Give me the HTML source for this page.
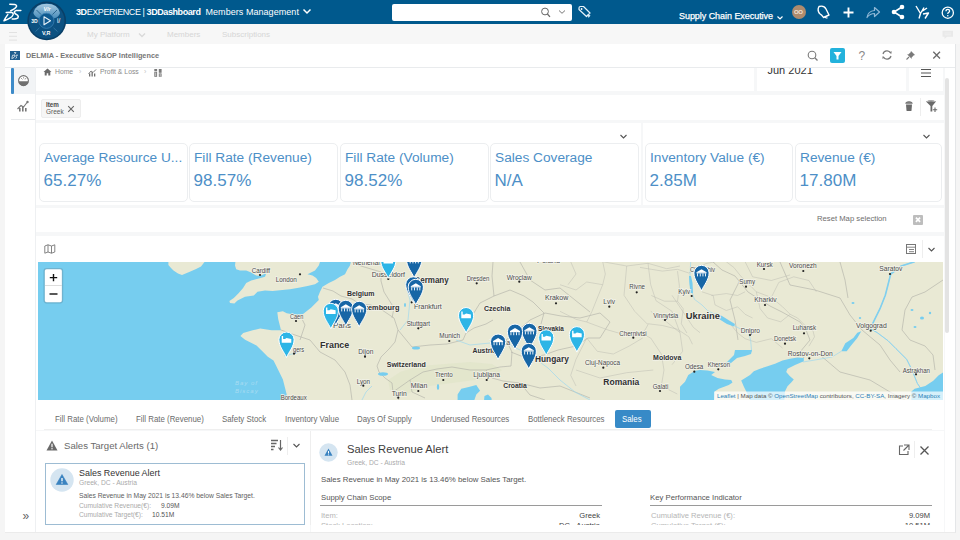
<!DOCTYPE html>
<html><head><meta charset="utf-8">
<style>
*{margin:0;padding:0;box-sizing:border-box}
html,body{width:960px;height:540px;overflow:hidden;background:#f5f5f5;font-family:"Liberation Sans",sans-serif;color:#3d3d3d}
.a{position:absolute}
.t{position:absolute;white-space:nowrap;line-height:1}
#top{left:0;top:0;width:960px;height:24px;background:#00598d}
#bar2{left:0;top:24px;width:960px;height:20px;background:#f7f7f7}
#widget{left:5px;top:44px;width:951px;height:489px;background:#fff;border-right:1px solid #e4e6e8;border-bottom:1px solid #ebebeb;overflow:hidden}
.panel{position:absolute;background:#fff}
.card{position:absolute;top:143px;height:59px;border:1px solid #eceef0;border-radius:5px;background:#fff}
.ct{position:absolute;left:4px;top:6.7px;font-size:13.7px;color:#4d8fc7;white-space:nowrap;line-height:1}
.cv{position:absolute;left:3.6px;top:28px;font-size:17px;color:#4d8fc7;white-space:nowrap;line-height:1}
.tab{position:absolute;top:415px;font-size:9.1px;color:#6b6b6b;white-space:nowrap;line-height:1;transform:scaleX(0.865);transform-origin:0 0}
</style></head>
<body>
<!-- TOP BAR -->
<div id="top" class="a">
  <svg class="a" style="left:0;top:0" width="28" height="24" viewBox="0 0 28 24">
    <g fill="none" stroke="#fff" stroke-width="1.5" stroke-linecap="round" stroke-linejoin="round">
      <path d="M9.8 4.3 L14.7 4.4 Q16.9 5 16.5 6.6 Q15.8 8.5 10.7 10.8"/>
      <path d="M20.9 10.4 L16 10.6 Q14 11.3 14.4 12.6 Q15 13.9 17.5 15.1 Q18.9 16.4 17.9 17.9 Q16.8 19 12.2 19.1"/>
      <path d="M6.2 12.4 L11.1 12.2 Q13.4 12.6 13.2 14.4 Q12.5 16.8 9.8 18.2 Q7 19.8 4 20.7 Q5.2 18 7.8 14.6"/>
    </g>
  </svg>
  <div class="t" style="left:76px;top:8px;font-size:9px;color:#fff;letter-spacing:-0.42px"><b>3D</b>EXPERIENCE | <b>3DDashboard</b></div>
  <div class="t" style="left:205.5px;top:7.5px;font-size:9px;color:#fff;letter-spacing:0.05px">Members Management</div>
  <svg class="a" style="left:302px;top:8px" width="10" height="7" viewBox="0 0 10 7"><path d="M1.5 1.5 L5 5 L8.5 1.5" fill="none" stroke="#fff" stroke-width="1.5"/></svg>
  <div class="a" style="left:392px;top:4px;width:180px;height:17px;background:#fff;border-radius:2px"></div>
  <svg class="a" style="left:538px;top:6px" width="13" height="13" viewBox="0 0 13 13"><circle cx="7" cy="5.5" r="3.4" fill="none" stroke="#666" stroke-width="1"/><path d="M9.4 8 L12 10.8" stroke="#666" stroke-width="1.2"/></svg>
  <svg class="a" style="left:558px;top:9px" width="8" height="6" viewBox="0 0 8 6"><path d="M1 1.5 L4 4.3 L7 1.5" fill="none" stroke="#777" stroke-width="1"/></svg>
  <svg class="a" style="left:577px;top:4px" width="16" height="16" viewBox="0 0 16 16"><path d="M2 4 Q2 2.5 3.5 2.5 L6.5 2.5 L13 9 L9.5 12.5 L2 5.5Z" fill="none" stroke="#e6f2fa" stroke-width="1.2" stroke-linejoin="round"/><circle cx="4.6" cy="5" r="0.9" fill="#fff"/><path d="M10.5 10 L13.5 11.5 L11.5 14Z" fill="#d8ecf8"/></svg>
  <div class="t" style="left:679px;top:12px;font-size:9px;color:#fff;letter-spacing:-0.05px;-webkit-text-stroke:0.25px #fff">Supply Chain Executive</div>
  <svg class="a" style="left:776px;top:15px" width="8" height="6" viewBox="0 0 8 6"><path d="M1.5 1.5 L4 4 L6.5 1.5" fill="none" stroke="#fff" stroke-width="1.2"/></svg>
  <div class="a" style="left:792px;top:5px;width:14px;height:14px;border-radius:50%;background:#ad8b6e"></div>
  <div class="t" style="left:794px;top:9px;font-size:6px;color:#f1e3d6;font-weight:bold;letter-spacing:-0.3px">OO</div>
  <svg class="a" style="left:815px;top:4px" width="17" height="16" viewBox="0 0 17 16"><path d="M4 2.5 Q9 1 11 5 Q12.5 8 14 11 L8.5 13.5 Q7 11 4.5 9.5 Q2 6 4 2.5Z" fill="none" stroke="#fff" stroke-width="1.4" stroke-linejoin="round"/><path d="M10 12.5 Q10.5 14.5 12.5 13.8" fill="none" stroke="#fff" stroke-width="1.2"/></svg>
  <svg class="a" style="left:841px;top:5px" width="15" height="15" viewBox="0 0 15 15"><path d="M7.5 2.5 L7.5 12.5 M2.5 7.5 L12.5 7.5" stroke="#fff" stroke-width="1.9"/></svg>
  <svg class="a" style="left:865px;top:5px" width="16" height="15" viewBox="0 0 16 15"><path d="M2 12.5 Q3 6 9.5 5.5 L9.5 2.5 L14.5 7 L9.5 11.5 L9.5 8.5 Q5 8.5 2 12.5Z" fill="none" stroke="#8fb8d6" stroke-width="1.2" stroke-linejoin="round"/></svg>
  <svg class="a" style="left:890px;top:4px" width="16" height="16" viewBox="0 0 16 16"><path d="M12 3 L4 8 L12 13" fill="none" stroke="#fff" stroke-width="1.6"/><circle cx="12" cy="3" r="2.3" fill="#fff"/><circle cx="4" cy="8" r="2.3" fill="#fff"/><circle cx="12" cy="13" r="2.3" fill="#fff"/></svg>
  <svg class="a" style="left:914px;top:4px" width="17" height="16" viewBox="0 0 17 16"><path d="M2 2 L6.5 9.5 L5 14.5 M6.5 9.5 L10 3.5 M8.5 7 L13 4 M9 10 L14.5 9 L11 14.5" fill="none" stroke="#fff" stroke-width="1.4" stroke-linejoin="round"/></svg>
  <svg class="a" style="left:939px;top:3.5px" width="17" height="17" viewBox="0 0 17 17"><circle cx="8.8" cy="8.7" r="5.6" fill="none" stroke="#fff" stroke-width="1.3"/><path d="M7 7.2 Q7 5.3 8.8 5.3 Q10.6 5.3 10.6 6.9 Q10.6 7.9 9.5 8.5 Q8.8 8.9 8.8 10" fill="none" stroke="#fff" stroke-width="1.3"/><circle cx="8.8" cy="11.8" r="0.8" fill="#fff"/></svg>
</div>
<div id="bar2" class="a">
  <div class="a" style="left:8.5px;top:7.5px;width:8px;height:1px;background:#e2e2e2;box-shadow:0 3.8px 0 #e2e2e2,0 7.6px 0 #e2e2e2"></div>
  <div class="t" style="left:87px;top:7px;font-size:8px;color:#d6d6d6">My Platform</div>
  <svg class="a" style="left:138px;top:8px" width="8" height="6"><path d="M1 1.5 L4 4.5 L7 1.5" fill="none" stroke="#d9d9d9" stroke-width="1.3"/></svg>
  <div class="t" style="left:167px;top:7px;font-size:8px;color:#d6d6d6">Members</div>
  <div class="t" style="left:222px;top:7px;font-size:8px;color:#d6d6d6">Subscriptions</div>
  <svg class="a" style="left:942px;top:6px" width="12" height="10" viewBox="0 0 12 10"><path d="M0.5 0.8 L11 0.8 L11 6.8 L5 6.8 L2.5 9 L2.5 6.8 L0.5 6.8Z" fill="#e9e9e9"/><path d="M2.5 3 L9 3 M2.5 4.8 L9 4.8" stroke="#f4f4f4" stroke-width="0.7"/></svg>
</div>
<!-- compass -->
<svg class="a" style="left:26px;top:0" width="42" height="42" viewBox="0 0 42 42">
  <defs><linearGradient id="cg" x1="0" y1="0" x2="0" y2="1"><stop offset="0" stop-color="#a4c8e0"/><stop offset="1" stop-color="#4b8ebb"/></linearGradient></defs>
  <circle cx="20.7" cy="20.9" r="19.4" fill="#093f67"/>
  <circle cx="20.7" cy="20.9" r="17.8" fill="#0c5181"/>
  <path d="M7.3 13 Q9.5 3.8 20.7 3.8 Q31.9 3.8 34 13 Q33 17 28.5 18.2 L13 18.2 Q8.5 17 7.3 13Z" fill="url(#cg)"/>
  <g stroke="#0d4a75" stroke-width="0.7"><path d="M10.5 10 L15 14.5"/><path d="M31 10 L26.5 14.5"/></g>
  <circle cx="20.4" cy="20.8" r="7.6" fill="#0f5a90" stroke="#3a7fb1" stroke-width="0.8"/>
  <path d="M18 16.8 L24.5 20.8 L18 24.8Z" fill="none" stroke="#e8f1f8" stroke-width="1.1" stroke-linejoin="round"/>
  <g stroke="#3f7fae" stroke-width="0.7"><path d="M9.5 31.5 L13.5 27.8"/><path d="M31.5 31.5 L27.5 27.8"/></g>
  <text x="5.2" y="23" font-size="5" font-weight="bold" fill="#fff" font-family="Liberation Sans">3D</text>
  <text x="16" y="34.5" font-size="5.4" font-weight="bold" fill="#fff" font-family="Liberation Sans">V,R</text>
  <text x="31" y="22.5" font-size="6.5" fill="#fff" font-family="Liberation Sans">i/</text>
  <text x="17.5" y="10.5" font-size="5.4" font-weight="bold" fill="#fff" font-family="Liberation Sans" font-style="italic">V/r</text>
</svg>
<div id="widget" class="a"></div>
<!-- widget header -->
<div class="a" style="left:5px;top:67px;width:950px;height:1px;background:#e9ebed"></div>
<div class="a" style="left:10px;top:51px;width:10px;height:9px;background:#1f5d8f"></div>
<svg class="a" style="left:10px;top:51px" width="10" height="9" viewBox="0 0 10 9"><g fill="none" stroke="#fff" stroke-width="0.7"><path d="M4 1.5 L6 1.6 L4.5 3.5"/><path d="M2.5 4.2 L4.5 4.2 Q5 5 4 6.5 L1.8 7.6Z"/><path d="M8 4.2 L6 4.2 Q5.3 5 6.5 6 Q7 7 5.5 7.6"/></g></svg>
<div class="t" style="left:26px;top:52px;font-size:7.3px;font-weight:bold;color:#767676">DELMIA - Executive S&amp;OP Intelligence</div>
<!-- header icons -->
<svg class="a" style="left:806px;top:49px" width="14" height="14" viewBox="0 0 14 14"><circle cx="6" cy="6" r="3.8" fill="none" stroke="#7a7a7a" stroke-width="1.1"/><path d="M8.8 8.8 L11.5 11.5" stroke="#7a7a7a" stroke-width="1.3"/></svg>
<div class="a" style="left:830px;top:48px;width:15px;height:15px;background:#23b2dc;border-radius:2px"></div>
<svg class="a" style="left:830px;top:48px" width="15" height="15" viewBox="0 0 15 15"><path d="M3.5 4 L11.5 4 L8.5 8 L8.5 11.5 L6.5 11.5 L6.5 8Z" fill="#fff"/></svg>
<div class="t" style="left:858.5px;top:50px;font-size:12px;color:#888">?</div>
<svg class="a" style="left:880px;top:48px" width="14" height="14" viewBox="0 0 14 14"><path d="M3 6 A4.2 4.2 0 0 1 10.8 5.2" fill="none" stroke="#7a7a7a" stroke-width="1.2"/><path d="M11 8 A4.2 4.2 0 0 1 3.2 8.8" fill="none" stroke="#7a7a7a" stroke-width="1.2"/><path d="M9.3 4.5 L11.5 5.8 L11.5 3Z" fill="#7a7a7a"/><path d="M4.7 9.5 L2.5 8.2 L2.5 11Z" fill="#7a7a7a"/></svg>
<svg class="a" style="left:904px;top:48px" width="14" height="14" viewBox="0 0 14 14"><path d="M7 3 L11 7 L9.5 7.5 L7.5 9.8 L7.8 11 L3 6.2 L4.2 6.5 L6.5 4.5Z" fill="#7a7a7a"/><path d="M5 9 L2.5 11.5" stroke="#7a7a7a" stroke-width="1.1"/></svg>
<svg class="a" style="left:930px;top:49px" width="13" height="13" viewBox="0 0 13 13"><path d="M3.3 2.8 L10 9.5 M10 2.8 L3.3 9.5" stroke="#6a6a6a" stroke-width="1.3"/></svg>
<!-- sidebar -->
<div class="a" style="left:35px;top:67px;width:1px;height:465px;background:#eef0f2"></div>
<div class="a" style="left:10.5px;top:68px;width:24.5px;height:25.5px;background:#f2f4f6"></div>
<div class="a" style="left:10.5px;top:68px;width:3px;height:25.5px;background:#3d8bc9;border-radius:1px"></div>
<div class="a" style="left:11px;top:119px;width:24px;height:1px;background:#e8eaec"></div>
<svg class="a" style="left:17px;top:74px" width="13" height="13" viewBox="0 0 13 13"><circle cx="6.5" cy="6.5" r="4.9" fill="#fff" stroke="#707070" stroke-width="1.1"/><path d="M1.6 7.3 L11.4 7.3 A4.9 4.9 0 0 1 1.6 7.3Z" fill="#707070"/><path d="M4 4 L5.5 5.5 M6.5 3 L6.8 4.6 M9 4 L8 5.5" stroke="#888" stroke-width="0.8"/></svg>
<svg class="a" style="left:16px;top:99px" width="14" height="14" viewBox="0 0 14 14"><g fill="#777"><rect x="3" y="9" width="1.6" height="3.5"/><rect x="6" y="7.5" width="1.6" height="5"/><rect x="9" y="9" width="1.6" height="3.5"/></g><path d="M1.5 10 L5 6.5 L7.5 8 L11 3.5" fill="none" stroke="#777" stroke-width="1.1"/><circle cx="11.5" cy="3" r="1.2" fill="#777"/></svg>
<div class="t" style="left:22.5px;top:510px;font-size:12px;color:#666">&#187;</div>
<div class="a" style="left:0;top:0;width:960px;height:540px;clip-path:inset(68px 15px 8px 36px)">
<!-- content background -->
<div class="a" style="left:36px;top:67px;width:909px;height:465px;background:#f6f7f8"></div>
<!-- breadcrumb panel -->
<div class="panel" style="left:36px;top:67px;width:718px;height:24px"></div>
<svg class="a" style="left:43px;top:68px" width="9" height="8" viewBox="0 0 9 8"><path d="M4.5 0.5 L8.5 4 L7.3 4 L7.3 7.5 L5.3 7.5 L5.3 5.3 L3.7 5.3 L3.7 7.5 L1.7 7.5 L1.7 4 L0.5 4Z" fill="#6a6a6a"/></svg>
<div class="t" style="left:55px;top:68.5px;font-size:6.8px;color:#8a8a8a">Home</div>
<div class="t" style="left:79px;top:68px;font-size:7px;color:#c5c5c5">&#8250;</div>
<svg class="a" style="left:88px;top:68px" width="9" height="9" viewBox="0 0 9 9"><g fill="#6f6f6f"><rect x="1" y="5.5" width="1.3" height="3"/><rect x="3.5" y="4" width="1.3" height="4.5"/><rect x="6" y="5.5" width="1.3" height="3"/></g><path d="M0.5 6 L3 3 L5 4.5 L8 1.5" fill="none" stroke="#6f6f6f" stroke-width="0.9"/></svg>
<div class="t" style="left:100px;top:68.5px;font-size:6.85px;color:#8a8a8a">Profit &amp; Loss</div>
<div class="t" style="left:144px;top:68px;font-size:7px;color:#c5c5c5">&#8250;</div>
<svg class="a" style="left:153.5px;top:68.5px" width="9" height="8" viewBox="0 0 9 8"><g fill="#7a7a7a"><rect x="0.3" y="0" width="2.8" height="2.2"/><rect x="0.3" y="2.8" width="2.8" height="5"/><rect x="4.8" y="0" width="2.8" height="3.8"/><rect x="4.8" y="4.4" width="2.8" height="3.4"/></g><path d="M1.7 3.5 L1.7 7 M6.2 5 L6.2 7.5" stroke="#fff" stroke-width="0.6"/></svg>
<div class="panel" style="left:757px;top:67px;width:149px;height:24px"></div>
<div class="t" style="left:767.5px;top:65px;font-size:11px;color:#333">Jun 2021</div>
<div class="panel" style="left:909px;top:67px;width:34px;height:24px"></div>
<div class="a" style="left:921px;top:69px;width:10px;height:1.2px;background:#555;box-shadow:0 3.5px 0 #555,0 7px 0 #555"></div>
<!-- filter panel -->
<div class="panel" style="left:36px;top:95px;width:908px;height:25px"></div>
<div class="a" style="left:41px;top:99px;width:40px;height:19px;background:#f6f6f6;border:1px solid #ededed;border-radius:2px"></div>
<div class="t" style="left:46px;top:102px;font-size:6.3px;font-weight:bold;color:#4a4a4a">Item</div>
<div class="t" style="left:46px;top:108.8px;font-size:6.5px;color:#5a5a5a">Greek</div>
<svg class="a" style="left:66px;top:104px" width="10" height="10" viewBox="0 0 10 10"><path d="M2.2 2.2 L7.8 7.8 M7.8 2.2 L2.2 7.8" stroke="#666" stroke-width="1.1"/></svg>
<svg class="a" style="left:904px;top:100px" width="10" height="12" viewBox="0 0 10 12"><path d="M1.3 3.8 Q1.3 1.2 5 1.2 Q8.7 1.2 8.7 3.8Z" fill="#6a6a6a"/><path d="M2 4.4 L8 4.4 L7.5 10.4 Q7.4 11 6.8 11 L3.2 11 Q2.6 11 2.5 10.4Z" fill="#6a6a6a"/><path d="M2.2 3.2 Q5 2.4 7.8 3.2" stroke="#aaa" stroke-width="0.5" fill="none"/></svg>
<div class="a" style="left:920px;top:98px;width:1px;height:18px;background:#eee"></div>
<svg class="a" style="left:925px;top:99px" width="14" height="14" viewBox="0 0 14 14"><path d="M1 2.5 Q6 0 11 2.5 L7.3 7 L7.3 12.5 L5.5 12.5 L5.5 7Z" fill="#6a6a6a"/><path d="M1.8 2.6 Q6 1.3 10.2 2.6" stroke="#ddd" stroke-width="0.6" fill="none"/><path d="M10 8.5 L10 13 M7.8 10.8 L12.2 10.8" stroke="#6a6a6a" stroke-width="1.1"/></svg>
<!-- KPI panels -->
<div class="panel" style="left:36px;top:123px;width:605px;height:82px"></div>
<div class="panel" style="left:643px;top:123px;width:301px;height:82px"></div>
<svg class="a" style="left:619px;top:133px" width="9" height="7" viewBox="0 0 9 7"><path d="M1.5 2 L4.5 5 L7.5 2" fill="none" stroke="#555" stroke-width="1.1"/></svg>
<svg class="a" style="left:922px;top:133px" width="9" height="7" viewBox="0 0 9 7"><path d="M1.5 2 L4.5 5 L7.5 2" fill="none" stroke="#555" stroke-width="1.1"/></svg>
<div class="card" style="left:39px;width:149px"><div class="ct">Average Resource U...</div><div class="cv">65.27%</div></div>
<div class="card" style="left:189px;width:149px"><div class="ct">Fill Rate (Revenue)</div><div class="cv">98.57%</div></div>
<div class="card" style="left:340px;width:149px"><div class="ct">Fill Rate (Volume)</div><div class="cv">98.52%</div></div>
<div class="card" style="left:490px;width:149px"><div class="ct">Sales Coverage</div><div class="cv">N/A</div></div>
<div class="card" style="left:645px;width:148px"><div class="ct">Inventory Value (€)</div><div class="cv">2.85M</div></div>
<div class="card" style="left:795px;width:147px"><div class="ct">Revenue (€)</div><div class="cv">17.80M</div></div>
<!-- reset panel -->
<div class="panel" style="left:36px;top:208px;width:908px;height:24px"></div>
<div class="t" style="left:817px;top:215.3px;font-size:7.7px;color:#6e6e6e">Reset Map selection</div>
<div class="a" style="left:913px;top:215px;width:10px;height:9.5px;background:#bdbdbd;border-radius:1px"></div>
<svg class="a" style="left:913px;top:215px" width="10" height="10" viewBox="0 0 10 10"><path d="M2.9 2.7 L7.1 6.9 M7.1 2.7 L2.9 6.9" stroke="#fff" stroke-width="1.7"/></svg>
<!-- map panel -->
<div class="panel" style="left:36px;top:236px;width:908px;height:194px"></div>
<svg class="a" style="left:44px;top:244px" width="12" height="10" viewBox="0 0 12 10"><path d="M0.8 2 L4 0.8 L7.5 2 L10.8 0.8 L10.8 8 L7.5 9.2 L4 8 L0.8 9.2Z M4 0.8 L4 8 M7.5 2 L7.5 9.2" fill="none" stroke="#777" stroke-width="0.9" stroke-linejoin="round"/></svg>
<svg class="a" style="left:906px;top:244px" width="10" height="10" viewBox="0 0 10 10"><rect x="0.5" y="0.5" width="9" height="9" fill="none" stroke="#777" stroke-width="1"/><path d="M0.5 3.2 L9.5 3.2 M3 5.5 L8 5.5 M3 7.7 L8 7.7" stroke="#777" stroke-width="0.9"/></svg>
<div class="a" style="left:922px;top:240px;width:1px;height:18px;background:#eee"></div>
<svg class="a" style="left:927px;top:246px" width="9" height="7" viewBox="0 0 9 7"><path d="M1.5 2 L4.5 5 L7.5 2" fill="none" stroke="#555" stroke-width="1.1"/></svg>
<!--MAPSTART--><svg class="a" style="left:38px;top:262px" width="905" height="138" viewBox="38 262 905 138">
<rect x="38" y="262" width="905" height="138" fill="#e9e9d4"/>
<polygon fill="#dce2c4" fill-opacity="0.45" points="388,380 400,372 420,366 445,364 470,362 492,364 502,370 495,376 475,380 452,383 430,386 412,392 398,396 390,390"/>
<polyline fill="none" stroke="#aeaea6" stroke-width="0.6" stroke-linejoin="round" points="323.0,288.0 333.0,291.0 341.0,296.0 352.0,299.0 360.0,304.0 371.0,305.0 382.0,310.0 394.0,318.0 398.0,330.0 395.0,342.0 389.0,349.0 381.0,357.0 377.0,366.0 379.0,372.0 385.0,378.0 392.0,383.0 393.0,392.0 399.0,400.0"/>
<polyline fill="none" stroke="#aeaea6" stroke-width="0.6" stroke-linejoin="round" points="352.0,262.0 361.0,266.0 381.0,272.0 381.0,281.0 384.0,292.0 389.0,300.0 394.0,308.0 392.0,318.0"/>
<polyline fill="none" stroke="#aeaea6" stroke-width="0.6" stroke-linejoin="round" points="398.0,330.0 412.0,347.0 430.0,345.0 447.0,344.0 463.0,340.0 466.0,333.0 474.0,328.0 486.0,324.0 493.0,320.0"/>
<polyline fill="none" stroke="#aeaea6" stroke-width="0.6" stroke-linejoin="round" points="466.0,333.0 472.0,316.0 480.0,303.0 494.0,296.0 510.0,290.0 524.0,296.0 533.0,302.0 544.0,313.0 541.0,324.0"/>
<polyline fill="none" stroke="#aeaea6" stroke-width="0.6" stroke-linejoin="round" points="493.0,262.0 492.0,276.0 494.0,296.0"/>
<polyline fill="none" stroke="#aeaea6" stroke-width="0.6" stroke-linejoin="round" points="393.0,392.0 410.0,380.0 423.0,372.0 437.0,369.0 452.0,367.0 470.0,370.0 486.0,370.0 500.0,367.0 511.0,366.0 512.0,352.0 506.0,340.0 515.0,333.0"/>
<polyline fill="none" stroke="#aeaea6" stroke-width="0.6" stroke-linejoin="round" points="486.0,370.0 492.0,378.0 503.0,381.0 520.0,383.0 540.0,388.0 560.0,386.0"/>
<polyline fill="none" stroke="#aeaea6" stroke-width="0.6" stroke-linejoin="round" points="515.0,333.0 530.0,320.0 545.0,313.0 561.0,316.0 580.0,318.0 600.0,313.0 610.0,322.0"/>
<polyline fill="none" stroke="#aeaea6" stroke-width="0.6" stroke-linejoin="round" points="511.0,352.0 526.0,358.0 544.0,355.0 558.0,350.0 576.0,346.0 588.0,338.0 600.0,338.0 610.0,322.0"/>
<polyline fill="none" stroke="#aeaea6" stroke-width="0.6" stroke-linejoin="round" points="713.0,262.0 722.0,270.0 735.0,276.0 748.0,292.0 770.0,306.0 782.0,312.0 800.0,322.0 806.0,330.0 810.0,340.0 800.0,352.0 804.0,358.0"/>
<polyline fill="none" stroke="#aeaea6" stroke-width="0.6" stroke-linejoin="round" points="943.0,280.0 925.0,292.0 912.0,297.0 905.0,310.0 902.0,330.0 910.0,340.0 925.0,346.0 933.0,355.0 935.0,370.0"/>
<polyline fill="none" stroke="#aeaea6" stroke-width="0.6" stroke-linejoin="round" points="780.0,262.0 790.0,285.0 815.0,290.0 840.0,298.0 850.0,315.0 862.0,330.0 880.0,345.0 890.0,360.0 900.0,372.0"/>
<polyline fill="none" stroke="#aeaea6" stroke-width="0.6" stroke-linejoin="round" points="840.0,262.0 845.0,280.0 848.0,298.0"/>
<polyline fill="none" stroke="#aeaea6" stroke-width="0.6" stroke-linejoin="round" points="820.0,355.0 840.0,372.0 870.0,380.0 890.0,392.0 905.0,400.0"/>
<polyline fill="none" stroke="#aeaea6" stroke-width="0.6" stroke-linejoin="round" points="281.0,330.0 295.0,335.0 310.0,340.0 320.0,352.0 335.0,360.0 345.0,372.0 350.0,385.0 352.0,400.0"/>
<polyline fill="none" stroke="#aeaea6" stroke-width="0.6" stroke-linejoin="round" points="300.0,315.0 305.0,325.0 300.0,340.0"/>
<polyline fill="none" stroke="#aeaea6" stroke-width="0.6" stroke-linejoin="round" points="410.0,380.0 412.0,392.0 425.0,398.0"/>
<polyline fill="none" stroke="#aeaea6" stroke-width="0.6" stroke-linejoin="round" points="520.0,383.0 530.0,395.0 545.0,400.0"/>
<polyline fill="none" stroke="#aeaea6" stroke-width="0.6" stroke-linejoin="round" points="560.0,386.0 575.0,392.0 590.0,398.0"/>
<polyline fill="none" stroke="#aeaea6" stroke-width="0.6" stroke-linejoin="round" points="520.0,262.0 530.0,280.0 545.0,290.0 560.0,288.0 575.0,300.0 590.0,312.0"/>
<polyline fill="none" stroke="#aeaea6" stroke-width="0.6" stroke-linejoin="round" points="740.0,280.0 730.0,300.0 735.0,320.0 738.0,340.0"/>
<polyline fill="none" stroke="#bdbdb2" stroke-width="0.5" stroke-linejoin="round" points="640.0,267.4 651.3,269.3 662.5,271.1 677.5,269.3 688.8,273.0 696.3,269.3 705.7,263.6 715.0,261.8"/>
<polyline fill="none" stroke="#bdbdb2" stroke-width="0.5" stroke-linejoin="round" points="726.3,261.8 733.8,267.4 741.3,276.8 750.7,286.1 756.3,291.8 771.3,297.4 782.6,306.8 790.1,314.3 797.6,318.0 805.1,325.5 812.6,329.3 814.5,336.8 808.9,346.2"/>
<polyline fill="none" stroke="#bdbdb2" stroke-width="0.5" stroke-linejoin="round" points="677.5,271.1 679.4,286.1 677.5,301.2 683.2,308.7 681.3,323.7 686.9,333.0"/>
<polyline fill="none" stroke="#bdbdb2" stroke-width="0.5" stroke-linejoin="round" points="701.9,291.8 713.2,295.5 715.0,304.9 726.3,310.5 737.6,306.8 745.1,314.3 752.6,318.0"/>
<polyline fill="none" stroke="#bdbdb2" stroke-width="0.5" stroke-linejoin="round" points="711.3,295.5 726.3,293.6 737.6,295.5 745.1,291.8"/>
<polyline fill="none" stroke="#bdbdb2" stroke-width="0.5" stroke-linejoin="round" points="651.3,295.5 664.4,301.2 677.5,301.2"/>
<polyline fill="none" stroke="#bdbdb2" stroke-width="0.5" stroke-linejoin="round" points="647.5,323.7 662.5,325.5 677.5,329.3 688.8,336.8 692.5,344.3"/>
<polyline fill="none" stroke="#bdbdb2" stroke-width="0.5" stroke-linejoin="round" points="730.1,323.7 737.6,333.0 745.1,338.7 756.3,342.4 771.3,338.7 782.6,348.1"/>
<polyline fill="none" stroke="#bdbdb2" stroke-width="0.5" stroke-linejoin="round" points="756.3,291.8 760.1,308.7 767.6,318.0 780.7,321.8 790.1,314.3"/>
<polyline fill="none" stroke="#bdbdb2" stroke-width="0.5" stroke-linejoin="round" points="771.3,297.4 778.8,282.4 793.8,276.8 808.9,280.5 816.4,291.8"/>
<polyline fill="none" stroke="#bdbdb2" stroke-width="0.5" stroke-linejoin="round" points="745.1,261.8 752.6,276.8 771.3,280.5 790.1,274.9"/>
<polyline fill="none" stroke="#bdbdb2" stroke-width="0.5" stroke-linejoin="round" points="602.7,261.7 605.3,274.0 602.7,284.7 597.3,298.0 592.0,311.3 586.7,322.0"/>
<polyline fill="none" stroke="#bdbdb2" stroke-width="0.5" stroke-linejoin="round" points="586.7,322.0 608.0,330.0 626.7,335.3 642.7,334.0 650.7,338.0 661.3,354.0 664.0,370.0 661.3,386.0 677.3,394.0"/>
<polyline fill="none" stroke="#bdbdb2" stroke-width="0.5" stroke-linejoin="round" points="602.7,261.7 626.7,266.0 648.0,263.3 666.7,268.7 680.0,266.0"/>
<polyline fill="none" stroke="#bdbdb2" stroke-width="0.5" stroke-linejoin="round" points="626.7,266.0 624.0,295.3 634.7,311.3 648.0,324.7 642.7,334.0"/>
<polyline fill="none" stroke="#bdbdb2" stroke-width="0.5" stroke-linejoin="round" points="648.0,263.3 650.7,284.7 656.0,300.7 672.0,311.3 680.0,332.7"/>
<polyline fill="none" stroke="#bdbdb2" stroke-width="0.5" stroke-linejoin="round" points="560.0,311.3 576.0,319.3 586.7,322.0"/>
<polyline fill="none" stroke="#bdbdb2" stroke-width="0.5" stroke-linejoin="round" points="586.7,338.0 576.0,359.3 570.7,375.3 576.0,386.0"/>
<polyline fill="none" stroke="#bdbdb2" stroke-width="0.5" stroke-linejoin="round" points="586.7,338.0 597.3,351.3 613.3,354.0 629.3,346.0 642.7,338.0"/>
<polyline fill="none" stroke="#bdbdb2" stroke-width="0.5" stroke-linejoin="round" points="576.0,370.0 600.0,378.0 626.7,372.7 653.3,370.0"/>
<polyline fill="none" stroke="#bdbdb2" stroke-width="0.5" stroke-linejoin="round" points="672.0,295.3 682.7,311.3 693.3,327.3 700.0,332.7"/>
<polyline fill="none" stroke="#bdbdb2" stroke-width="0.5" stroke-linejoin="round" points="650.7,311.3 666.7,322.0 680.0,332.7 682.7,351.3 672.0,364.7"/>
<polyline fill="none" stroke="#bdbdb2" stroke-width="0.5" stroke-linejoin="round" points="560.0,284.7 576.0,290.0 586.7,282.0 602.7,284.7"/>
<polyline fill="none" stroke="#bdbdb2" stroke-width="0.5" stroke-linejoin="round" points="570.7,261.7 576.0,274.0 568.0,284.7"/>
<polyline fill="none" stroke="#9fd8ee" stroke-width="0.7" stroke-linejoin="round" points="690.7,262.0 689.7,280.5 690.7,288.0 694.4,299.3 701.9,304.9 707.5,310.5 718.8,316.2 724.4,321.8 733.8,325.5 741.3,329.3 748.8,333.0 750.7,340.5 751.6,351.8"/>
<polyline fill="none" stroke="#9fd8ee" stroke-width="0.7" stroke-linejoin="round" points="914.7,261.7 901.3,266.0 890.7,274.0 888.0,284.7 885.3,295.3 880.0,308.7 874.7,319.3 870.7,328.7 877.3,332.7 888.0,340.7 896.0,348.7 906.7,359.3 912.0,370.0 917.3,383.3 922.7,391.3"/>
<polyline fill="none" stroke="#9fd8ee" stroke-width="0.7" stroke-linejoin="round" points="841.3,351.3 832.0,357.0 815.0,360.0 803.0,362.0"/>
<polyline fill="none" stroke="#9fd8ee" stroke-width="0.7" stroke-linejoin="round" points="456.0,340.0 470.0,345.0 490.0,343.0 510.0,345.0 530.0,355.0 548.0,368.0 560.0,380.0 575.0,392.0 590.0,400.0"/>
<polyline fill="none" stroke="#9fd8ee" stroke-width="0.7" stroke-linejoin="round" points="300.0,352.0 292.0,354.0 284.0,356.0"/>
<polyline fill="none" stroke="#9fd8ee" stroke-width="0.7" stroke-linejoin="round" points="372.0,386.0 366.0,392.0 362.0,400.0"/>
<polyline fill="none" stroke="#9fd8ee" stroke-width="0.7" stroke-linejoin="round" points="405.0,282.0 410.0,300.0 408.0,320.0 400.0,330.0"/>
<polyline fill="none" stroke="#80cfee" stroke-width="1.6" stroke-linejoin="round" points="914.7,261.7 901.3,266.0 890.7,274.0 888.0,284.7 885.3,295.3 880.0,308.7 874.7,319.3 871.0,327.0"/>
<polyline fill="none" stroke="#8fd3ee" stroke-width="1.0" stroke-linejoin="round" points="871.0,329.0 877.3,332.7 888.0,340.7 896.0,348.7 906.7,359.3 912.0,370.0 917.3,383.3 922.7,391.3"/>
<polygon fill="#76cdef" points="30.0,255.0 168.4,255.0 168.4,265.0 171.0,268.0 173.5,270.5 178.0,273.5 182.0,275.0 188.0,272.5 195.0,269.5 201.0,266.5 204.5,262.0 204.5,255.0 236.2,255.0 235.0,265.5 236.2,269.2 240.0,270.5 246.2,270.5 251.2,272.4 256.2,275.5 260.0,276.1 263.8,274.2 266.2,273.5 265.0,276.8 258.8,278.6 251.2,280.5 246.2,283.0 243.1,288.0 238.8,293.0 233.8,298.0 229.4,301.1 230.0,303.0 234.4,303.6 237.5,300.5 245.0,296.8 253.8,295.5 257.5,291.8 265.0,290.5 272.5,291.1 282.5,289.9 290.0,289.2 300.0,287.4 307.5,286.1 315.0,284.2 318.8,281.8 316.2,278.0 312.5,275.5 307.5,274.2 315.0,270.5 318.8,265.5 320.0,262.0 320.0,255.0 352.5,255.0 350.0,265.5 347.5,269.2 345.0,274.2 340.0,276.8 335.0,279.9 328.8,283.0 322.5,286.8 320.0,291.8 318.0,296.8 318.8,300.0 311.3,307.6 301.8,315.1 292.4,314.2 286.7,313.2 282.9,311.3 277.3,312.3 278.2,318.9 280.1,326.5 281.0,330.2 271.6,330.2 260.2,328.4 252.7,330.2 243.2,333.1 240.4,335.9 245.1,339.7 256.5,345.4 262.1,351.0 267.8,356.7 273.5,360.5 275.4,364.3 279.1,371.8 282.9,379.4 284.8,387.0 286.7,394.5 286.7,405.0 30.0,405.0"/>
<polygon fill="#76cdef" points="457.6,405.0 457.6,394.4 461.3,388.8 468.8,386.9 476.3,385.0 480.1,390.7 476.3,394.4 472.6,405.0"/>
<polygon fill="#76cdef" points="483.5,405.0 484.5,396.0 488.0,394.5 491.5,398.0 492.0,405.0"/>
<polygon fill="#76cdef" points="680.0,405.0 680.0,386.7 685.0,381.7 688.3,375.0 695.0,370.8 700.0,370.0 707.5,370.6 715.0,371.9 711.2,375.0 717.5,378.1 725.0,379.4 731.2,380.0 732.5,382.5 728.8,385.0 718.8,388.8 715.0,391.2 714.0,405.0"/>
<polygon fill="#76cdef" points="741.2,380.5 750.0,375.0 753.8,371.2 760.0,368.8 767.5,366.2 775.0,363.8 782.5,360.6 790.0,358.8 797.5,357.5 803.8,358.1 803.8,361.2 795.0,365.0 787.5,368.8 786.2,371.9 790.0,376.2 793.8,379.4 791.2,382.5 787.5,386.2 785.0,391.2 784.0,405.0 752.0,405.0 748.0,395.0 744.0,387.0"/>
<polygon fill="#76cdef" points="950.0,368.0 938.7,375.3 933.3,380.7 925.3,386.0 914.7,388.7 911.4,391.5 911.4,405.0 950.0,405.0"/>
<polygon fill="#76cdef" points="841.3,351.3 845.3,343.3 853.3,338.0 857.3,332.7 861.3,331.3 857.3,338.0 850.7,346.0 846.7,351.3"/>
<polygon fill="#76cdef" points="735.0,350.0 752.0,350.0 751.0,354.0 745.0,356.0 737.0,358.0 731.0,363.0 726.0,367.0 723.0,366.0 729.0,360.0 734.0,355.0"/>
<polygon fill="#76cdef" points="689.0,276.0 691.0,276.0 692.5,283.0 693.0,293.0 690.5,293.0 689.5,284.0"/>
<polygon fill="#76cdef" points="716.0,313.0 722.0,316.0 730.0,321.0 735.0,324.0 734.0,326.5 727.0,324.0 719.0,319.0 714.0,315.5"/>
<ellipse cx="383" cy="374" rx="5" ry="1.8" fill="#76cdef"/>
<ellipse cx="416" cy="348" rx="4" ry="1.5" fill="#76cdef"/>
<ellipse cx="438" cy="387" rx="1.2" ry="3" fill="#76cdef"/>
<ellipse cx="405" cy="305" rx="1" ry="2" fill="#76cdef"/>
<ellipse cx="853" cy="303" rx="1.5" ry="1" fill="#76cdef"/>
<ellipse cx="860" cy="318" rx="1.2" ry="1" fill="#76cdef"/>
<ellipse cx="912" cy="310" rx="1.5" ry="1" fill="#76cdef"/>
<ellipse cx="922" cy="318" rx="2" ry="1.5" fill="#76cdef"/>
<ellipse cx="930" cy="313" rx="1.2" ry="1.2" fill="#76cdef"/>
<ellipse cx="915" cy="327" rx="1.5" ry="1" fill="#76cdef"/>
<text x="251.7" y="272.5" font-size="6.9" fill="#4a4a4a" font-family="Liberation Sans" stroke="#f2f2e8" stroke-width="1.5" paint-order="stroke" textLength="18.3" lengthAdjust="spacingAndGlyphs">Cardiff</text>
<text x="275.7" y="281.5" font-size="6.9" fill="#4a4a4a" font-family="Liberation Sans" stroke="#f2f2e8" stroke-width="1.5" paint-order="stroke" textLength="21.0" lengthAdjust="spacingAndGlyphs">London</text>
<text x="290" y="318.5" font-size="6.9" fill="#4a4a4a" font-family="Liberation Sans" stroke="#f2f2e8" stroke-width="1.5" paint-order="stroke" textLength="13.3" lengthAdjust="spacingAndGlyphs">Caen</text>
<text x="293" y="351.5" font-size="6.9" fill="#4a4a4a" font-family="Liberation Sans" stroke="#f2f2e8" stroke-width="1.5" paint-order="stroke" textLength="11.0" lengthAdjust="spacingAndGlyphs">gers</text>
<text x="280.7" y="400" font-size="6.9" fill="#4a4a4a" font-family="Liberation Sans" stroke="#f2f2e8" stroke-width="1.5" paint-order="stroke" textLength="26.0" lengthAdjust="spacingAndGlyphs">Bordeaux</text>
<text x="333" y="327.5" font-size="6.9" fill="#4a4a4a" font-family="Liberation Sans" stroke="#f2f2e8" stroke-width="1.5" paint-order="stroke" textLength="18.0" lengthAdjust="spacingAndGlyphs">Paris</text>
<text x="353" y="264.5" font-size="6.9" fill="#4a4a4a" font-family="Liberation Sans" stroke="#f2f2e8" stroke-width="1.5" paint-order="stroke" textLength="36.0" lengthAdjust="spacingAndGlyphs">Netherlands</text>
<text x="371.7" y="277" font-size="6.9" fill="#4a4a4a" font-family="Liberation Sans" stroke="#f2f2e8" stroke-width="1.5" paint-order="stroke" textLength="33.3" lengthAdjust="spacingAndGlyphs">Dusseldorf</text>
<text x="466.7" y="281" font-size="6.9" fill="#4a4a4a" font-family="Liberation Sans" stroke="#f2f2e8" stroke-width="1.5" paint-order="stroke" textLength="22.6" lengthAdjust="spacingAndGlyphs">Dresden</text>
<text x="506.7" y="280" font-size="6.9" fill="#4a4a4a" font-family="Liberation Sans" stroke="#f2f2e8" stroke-width="1.5" paint-order="stroke" textLength="25.0" lengthAdjust="spacingAndGlyphs">Wroclaw</text>
<text x="537" y="262.5" font-size="6.9" fill="#4a4a4a" font-family="Liberation Sans" stroke="#f2f2e8" stroke-width="1.5" paint-order="stroke" textLength="23.0" lengthAdjust="spacingAndGlyphs">Poland</text>
<text x="414" y="309" font-size="6.9" fill="#4a4a4a" font-family="Liberation Sans" stroke="#f2f2e8" stroke-width="1.5" paint-order="stroke" textLength="27.7" lengthAdjust="spacingAndGlyphs">Frankfurt</text>
<text x="545" y="300" font-size="6.9" fill="#4a4a4a" font-family="Liberation Sans" stroke="#f2f2e8" stroke-width="1.5" paint-order="stroke" textLength="23.3" lengthAdjust="spacingAndGlyphs">Krakow</text>
<text x="629.3" y="289" font-size="6.9" fill="#4a4a4a" font-family="Liberation Sans" stroke="#f2f2e8" stroke-width="1.5" paint-order="stroke" textLength="15.7" lengthAdjust="spacingAndGlyphs">Rivne</text>
<text x="603.3" y="304" font-size="6.9" fill="#4a4a4a" font-family="Liberation Sans" stroke="#f2f2e8" stroke-width="1.5" paint-order="stroke" textLength="11.7" lengthAdjust="spacingAndGlyphs">Lviv</text>
<text x="406.7" y="326" font-size="6.9" fill="#4a4a4a" font-family="Liberation Sans" stroke="#f2f2e8" stroke-width="1.5" paint-order="stroke" textLength="23.3" lengthAdjust="spacingAndGlyphs">Stuttgart</text>
<text x="439.3" y="337.5" font-size="6.9" fill="#4a4a4a" font-family="Liberation Sans" stroke="#f2f2e8" stroke-width="1.5" paint-order="stroke" textLength="20.7" lengthAdjust="spacingAndGlyphs">Munich</text>
<text x="619.3" y="336" font-size="6.9" fill="#4a4a4a" font-family="Liberation Sans" stroke="#f2f2e8" stroke-width="1.5" paint-order="stroke" textLength="27.4" lengthAdjust="spacingAndGlyphs">Chernivtsi</text>
<text x="490" y="345" font-size="6.9" fill="#4a4a4a" font-family="Liberation Sans" stroke="#f2f2e8" stroke-width="1.5" paint-order="stroke" textLength="20.0" lengthAdjust="spacingAndGlyphs">Vienna</text>
<text x="358.3" y="354" font-size="6.9" fill="#4a4a4a" font-family="Liberation Sans" stroke="#f2f2e8" stroke-width="1.5" paint-order="stroke" textLength="15.0" lengthAdjust="spacingAndGlyphs">Dijon</text>
<text x="585" y="365" font-size="6.9" fill="#4a4a4a" font-family="Liberation Sans" stroke="#f2f2e8" stroke-width="1.5" paint-order="stroke" textLength="35.0" lengthAdjust="spacingAndGlyphs">Cluj-Napoca</text>
<text x="435" y="377" font-size="6.9" fill="#4a4a4a" font-family="Liberation Sans" stroke="#f2f2e8" stroke-width="1.5" paint-order="stroke" textLength="17.7" lengthAdjust="spacingAndGlyphs">Trento</text>
<text x="473.3" y="377" font-size="6.9" fill="#4a4a4a" font-family="Liberation Sans" stroke="#f2f2e8" stroke-width="1.5" paint-order="stroke" textLength="26.7" lengthAdjust="spacingAndGlyphs">Ljubljana</text>
<text x="356.7" y="383.5" font-size="6.9" fill="#4a4a4a" font-family="Liberation Sans" stroke="#f2f2e8" stroke-width="1.5" paint-order="stroke" textLength="13.3" lengthAdjust="spacingAndGlyphs">Lyon</text>
<text x="410.7" y="388" font-size="6.9" fill="#4a4a4a" font-family="Liberation Sans" stroke="#f2f2e8" stroke-width="1.5" paint-order="stroke" textLength="16.6" lengthAdjust="spacingAndGlyphs">Milan</text>
<text x="391.7" y="395.5" font-size="6.9" fill="#4a4a4a" font-family="Liberation Sans" stroke="#f2f2e8" stroke-width="1.5" paint-order="stroke" textLength="15.0" lengthAdjust="spacingAndGlyphs">Turin</text>
<text x="690" y="271.5" font-size="6.9" fill="#4a4a4a" font-family="Liberation Sans" stroke="#f2f2e8" stroke-width="1.5" paint-order="stroke" textLength="25.0" lengthAdjust="spacingAndGlyphs">Chernihiv</text>
<text x="756.7" y="266.5" font-size="6.9" fill="#4a4a4a" font-family="Liberation Sans" stroke="#f2f2e8" stroke-width="1.5" paint-order="stroke" textLength="16.0" lengthAdjust="spacingAndGlyphs">Kursk</text>
<text x="789" y="268" font-size="6.9" fill="#4a4a4a" font-family="Liberation Sans" stroke="#f2f2e8" stroke-width="1.5" paint-order="stroke" textLength="27.7" lengthAdjust="spacingAndGlyphs">Voronezh</text>
<text x="879.3" y="271" font-size="6.9" fill="#4a4a4a" font-family="Liberation Sans" stroke="#f2f2e8" stroke-width="1.5" paint-order="stroke" textLength="23.0" lengthAdjust="spacingAndGlyphs">Saratov</text>
<text x="739.3" y="284" font-size="6.9" fill="#4a4a4a" font-family="Liberation Sans" stroke="#f2f2e8" stroke-width="1.5" paint-order="stroke" textLength="15.7" lengthAdjust="spacingAndGlyphs">Sumy</text>
<text x="678.3" y="293.5" font-size="6.9" fill="#4a4a4a" font-family="Liberation Sans" stroke="#f2f2e8" stroke-width="1.5" paint-order="stroke" textLength="11.7" lengthAdjust="spacingAndGlyphs">Kyiv</text>
<text x="754.3" y="302" font-size="6.9" fill="#4a4a4a" font-family="Liberation Sans" stroke="#f2f2e8" stroke-width="1.5" paint-order="stroke" textLength="22.4" lengthAdjust="spacingAndGlyphs">Kharkiv</text>
<text x="653.3" y="317.5" font-size="6.9" fill="#4a4a4a" font-family="Liberation Sans" stroke="#f2f2e8" stroke-width="1.5" paint-order="stroke" textLength="25.0" lengthAdjust="spacingAndGlyphs">Vinnytsia</text>
<text x="856" y="327.5" font-size="6.9" fill="#4a4a4a" font-family="Liberation Sans" stroke="#f2f2e8" stroke-width="1.5" paint-order="stroke" textLength="30.7" lengthAdjust="spacingAndGlyphs">Volgograd</text>
<text x="792.7" y="330" font-size="6.9" fill="#4a4a4a" font-family="Liberation Sans" stroke="#f2f2e8" stroke-width="1.5" paint-order="stroke" textLength="23.3" lengthAdjust="spacingAndGlyphs">Luhansk</text>
<text x="740.7" y="332.5" font-size="6.9" fill="#4a4a4a" font-family="Liberation Sans" stroke="#f2f2e8" stroke-width="1.5" paint-order="stroke" textLength="19.3" lengthAdjust="spacingAndGlyphs">Dnipro</text>
<text x="774" y="341" font-size="6.9" fill="#4a4a4a" font-family="Liberation Sans" stroke="#f2f2e8" stroke-width="1.5" paint-order="stroke" textLength="22.0" lengthAdjust="spacingAndGlyphs">Donetsk</text>
<text x="787.7" y="356" font-size="6.9" fill="#4a4a4a" font-family="Liberation Sans" stroke="#f2f2e8" stroke-width="1.5" paint-order="stroke" textLength="45.0" lengthAdjust="spacingAndGlyphs">Rostov-on-Don</text>
<text x="685" y="369" font-size="6.9" fill="#4a4a4a" font-family="Liberation Sans" stroke="#f2f2e8" stroke-width="1.5" paint-order="stroke" textLength="18.3" lengthAdjust="spacingAndGlyphs">Odesa</text>
<text x="707.7" y="367" font-size="6.9" fill="#4a4a4a" font-family="Liberation Sans" stroke="#f2f2e8" stroke-width="1.5" paint-order="stroke" textLength="22.3" lengthAdjust="spacingAndGlyphs">Kherson</text>
<text x="902.7" y="372.5" font-size="6.9" fill="#4a4a4a" font-family="Liberation Sans" stroke="#f2f2e8" stroke-width="1.5" paint-order="stroke" textLength="27.3" lengthAdjust="spacingAndGlyphs">Astrakhan</text>
<text x="652.7" y="389" font-size="6.9" fill="#4a4a4a" font-family="Liberation Sans" stroke="#f2f2e8" stroke-width="1.5" paint-order="stroke" textLength="15.6" lengthAdjust="spacingAndGlyphs">Galati</text>
<circle cx="260" cy="275" r="1.1" fill="#222"/>
<circle cx="300" cy="274.3" r="1.1" fill="#222"/>
<circle cx="296" cy="321" r="1.1" fill="#222"/>
<circle cx="294" cy="353.7" r="1.1" fill="#222"/>
<circle cx="388.3" cy="279" r="1.1" fill="#222"/>
<circle cx="476.7" cy="283.3" r="1.1" fill="#222"/>
<circle cx="519.3" cy="281.7" r="1.1" fill="#222"/>
<circle cx="411.7" cy="302.3" r="1.1" fill="#222"/>
<circle cx="556" cy="303.3" r="1.1" fill="#222"/>
<circle cx="636.7" cy="292.3" r="1.1" fill="#222"/>
<circle cx="609.3" cy="306.7" r="1.1" fill="#222"/>
<circle cx="418.3" cy="328.3" r="1.1" fill="#222"/>
<circle cx="449.3" cy="341" r="1.1" fill="#222"/>
<circle cx="633.3" cy="337.7" r="1.1" fill="#222"/>
<circle cx="365" cy="356.7" r="1.1" fill="#222"/>
<circle cx="603.3" cy="367.7" r="1.1" fill="#222"/>
<circle cx="443.3" cy="380" r="1.1" fill="#222"/>
<circle cx="486.7" cy="380" r="1.1" fill="#222"/>
<circle cx="363.3" cy="385.7" r="1.1" fill="#222"/>
<circle cx="418.3" cy="391" r="1.1" fill="#222"/>
<circle cx="398.3" cy="397.7" r="1.1" fill="#222"/>
<circle cx="764" cy="269" r="1.1" fill="#222"/>
<circle cx="803.3" cy="271" r="1.1" fill="#222"/>
<circle cx="890" cy="274" r="1.1" fill="#222"/>
<circle cx="746" cy="286.7" r="1.1" fill="#222"/>
<circle cx="691.7" cy="296" r="1.1" fill="#222"/>
<circle cx="765" cy="305" r="1.1" fill="#222"/>
<circle cx="665" cy="320" r="1.1" fill="#222"/>
<circle cx="870.7" cy="330.7" r="1.1" fill="#222"/>
<circle cx="804" cy="333.3" r="1.1" fill="#222"/>
<circle cx="750" cy="335" r="1.1" fill="#222"/>
<circle cx="785" cy="343.7" r="1.1" fill="#222"/>
<circle cx="809.3" cy="358.3" r="1.1" fill="#222"/>
<circle cx="694.3" cy="371.7" r="1.1" fill="#222"/>
<circle cx="718.3" cy="369.3" r="1.1" fill="#222"/>
<circle cx="916" cy="374.3" r="1.1" fill="#222"/>
<circle cx="660" cy="391" r="1.1" fill="#222"/>
<text x="320" y="348" font-size="9.5" font-weight="bold" fill="#303030" font-family="Liberation Sans" stroke="#f2f2e8" stroke-width="1.6" paint-order="stroke" textLength="29.3" lengthAdjust="spacingAndGlyphs">France</text>
<text x="414" y="282.5" font-size="9" font-weight="bold" fill="#303030" font-family="Liberation Sans" stroke="#f2f2e8" stroke-width="1.6" paint-order="stroke" textLength="34.7" lengthAdjust="spacingAndGlyphs">Germany</text>
<text x="346.9" y="296" font-size="7.5" font-weight="bold" fill="#303030" font-family="Liberation Sans" stroke="#f2f2e8" stroke-width="1.6" paint-order="stroke" textLength="27.5" lengthAdjust="spacingAndGlyphs">Belgium</text>
<text x="355" y="309.9" font-size="7.5" font-weight="bold" fill="#303030" font-family="Liberation Sans" stroke="#f2f2e8" stroke-width="1.6" paint-order="stroke" textLength="44.4" lengthAdjust="spacingAndGlyphs">Luxembourg</text>
<text x="484.1" y="310.5" font-size="7.5" font-weight="bold" fill="#303030" font-family="Liberation Sans" stroke="#f2f2e8" stroke-width="1.6" paint-order="stroke" textLength="26.3" lengthAdjust="spacingAndGlyphs">Czechia</text>
<text x="538" y="330.6" font-size="7.5" font-weight="bold" fill="#303030" font-family="Liberation Sans" stroke="#f2f2e8" stroke-width="1.6" paint-order="stroke" textLength="25.8" lengthAdjust="spacingAndGlyphs">Slovakia</text>
<text x="472.5" y="352.5" font-size="7.5" font-weight="bold" fill="#303030" font-family="Liberation Sans" stroke="#f2f2e8" stroke-width="1.6" paint-order="stroke" textLength="23.5" lengthAdjust="spacingAndGlyphs">Austria</text>
<text x="535" y="361.9" font-size="9" font-weight="bold" fill="#303030" font-family="Liberation Sans" stroke="#f2f2e8" stroke-width="1.6" paint-order="stroke" textLength="33.8" lengthAdjust="spacingAndGlyphs">Hungary</text>
<text x="386.7" y="366.7" font-size="7.5" font-weight="bold" fill="#303030" font-family="Liberation Sans" stroke="#f2f2e8" stroke-width="1.6" paint-order="stroke" textLength="39.1" lengthAdjust="spacingAndGlyphs">Switzerland</text>
<text x="503.3" y="387.5" font-size="7.5" font-weight="bold" fill="#303030" font-family="Liberation Sans" stroke="#f2f2e8" stroke-width="1.6" paint-order="stroke" textLength="23.4" lengthAdjust="spacingAndGlyphs">Croatia</text>
<text x="603.3" y="385" font-size="8.5" font-weight="bold" fill="#303030" font-family="Liberation Sans" stroke="#f2f2e8" stroke-width="1.6" paint-order="stroke" textLength="36.0" lengthAdjust="spacingAndGlyphs">Romania</text>
<text x="685.7" y="319" font-size="9" font-weight="bold" fill="#303030" font-family="Liberation Sans" stroke="#f2f2e8" stroke-width="1.6" paint-order="stroke" textLength="34.3" lengthAdjust="spacingAndGlyphs">Ukraine</text>
<text x="653.1" y="360" font-size="7.5" font-weight="bold" fill="#303030" font-family="Liberation Sans" stroke="#f2f2e8" stroke-width="1.6" paint-order="stroke" textLength="28.2" lengthAdjust="spacingAndGlyphs">Moldova</text>
<text x="235" y="385" font-size="6" font-style="italic" fill="#a8dcf2" font-family="Liberation Sans" letter-spacing="1">Bay of</text>
<text x="235" y="393" font-size="6" font-style="italic" fill="#a8dcf2" font-family="Liberation Sans" letter-spacing="1">Biscay</text>
<path d="M414.20 277.80 C411.90 272.30 406.60 266.80 406.60 259.90 A7.60 7.60 0 1 1 421.80 259.90 C421.80 266.80 416.50 272.30 414.20 277.80 Z" fill="#1766a6" stroke="#fff" stroke-width="1" stroke-miterlimit="10"/><path d="M409.2 259.2 L414.2 256.2 L419.2 259.2 Z" fill="#fff"/><rect x="409.2" y="259.2" width="10" height="1.2" fill="#fff"/><rect x="409.7" y="260.4" width="0.9" height="3" fill="#fff"/><rect x="412.5" y="260.4" width="0.9" height="3" fill="#fff"/><rect x="415.2" y="260.4" width="0.9" height="3" fill="#fff"/><rect x="417.8" y="260.4" width="0.9" height="3" fill="#fff"/>
<path d="M388.30 278.30 C386.00 272.80 380.70 267.30 380.70 260.40 A7.60 7.60 0 1 1 395.90 260.40 C395.90 267.30 390.60 272.80 388.30 278.30 Z" fill="#2db5e6" stroke="#fff" stroke-width="1" stroke-miterlimit="10"/><path d="M383.5 263.5 L383.5 256.9 L384.9 256.9 L384.9 259.7 L386.8 259.7 L388.3 258.7 L393.1 259.7 L393.1 263.5 Z" fill="#fff"/>
<path d="M701.50 290.80 C699.20 285.30 693.90 279.80 693.90 272.90 A7.60 7.60 0 1 1 709.10 272.90 C709.10 279.80 703.80 285.30 701.50 290.80 Z" fill="#1766a6" stroke="#fff" stroke-width="1" stroke-miterlimit="10"/><path d="M696.5 272.2 L701.5 269.2 L706.5 272.2 Z" fill="#fff"/><rect x="696.5" y="272.2" width="10" height="1.2" fill="#fff"/><rect x="697.0" y="273.4" width="0.9" height="3" fill="#fff"/><rect x="699.8" y="273.4" width="0.9" height="3" fill="#fff"/><rect x="702.5" y="273.4" width="0.9" height="3" fill="#fff"/><rect x="705.1" y="273.4" width="0.9" height="3" fill="#fff"/>
<path d="M413.30 302.30 C411.00 296.80 405.70 291.30 405.70 284.40 A7.60 7.60 0 1 1 420.90 284.40 C420.90 291.30 415.60 296.80 413.30 302.30 Z" fill="#1766a6" stroke="#fff" stroke-width="1" stroke-miterlimit="10"/><path d="M408.3 283.7 L413.3 280.7 L418.3 283.7 Z" fill="#fff"/><rect x="408.3" y="283.7" width="10" height="1.2" fill="#fff"/><rect x="408.8" y="284.9" width="0.9" height="3" fill="#fff"/><rect x="411.6" y="284.9" width="0.9" height="3" fill="#fff"/><rect x="414.3" y="284.9" width="0.9" height="3" fill="#fff"/><rect x="416.9" y="284.9" width="0.9" height="3" fill="#fff"/>
<path d="M415.80 304.80 C413.50 299.30 408.20 293.80 408.20 286.90 A7.60 7.60 0 1 1 423.40 286.90 C423.40 293.80 418.10 299.30 415.80 304.80 Z" fill="#1766a6" stroke="#fff" stroke-width="1" stroke-miterlimit="10"/><path d="M410.8 286.2 L415.8 283.2 L420.8 286.2 Z" fill="#fff"/><rect x="410.8" y="286.2" width="10" height="1.2" fill="#fff"/><rect x="411.3" y="287.4" width="0.9" height="3" fill="#fff"/><rect x="414.1" y="287.4" width="0.9" height="3" fill="#fff"/><rect x="416.8" y="287.4" width="0.9" height="3" fill="#fff"/><rect x="419.4" y="287.4" width="0.9" height="3" fill="#fff"/>
<path d="M335.80 324.80 C333.50 319.30 328.20 313.80 328.20 306.90 A7.60 7.60 0 1 1 343.40 306.90 C343.40 313.80 338.10 319.30 335.80 324.80 Z" fill="#1766a6" stroke="#fff" stroke-width="1" stroke-miterlimit="10"/><path d="M330.8 306.2 L335.8 303.2 L340.8 306.2 Z" fill="#fff"/><rect x="330.8" y="306.2" width="10" height="1.2" fill="#fff"/><rect x="331.3" y="307.4" width="0.9" height="3" fill="#fff"/><rect x="334.1" y="307.4" width="0.9" height="3" fill="#fff"/><rect x="336.8" y="307.4" width="0.9" height="3" fill="#fff"/><rect x="339.4" y="307.4" width="0.9" height="3" fill="#fff"/>
<path d="M345.80 325.80 C343.50 320.30 338.20 314.80 338.20 307.90 A7.60 7.60 0 1 1 353.40 307.90 C353.40 314.80 348.10 320.30 345.80 325.80 Z" fill="#1766a6" stroke="#fff" stroke-width="1" stroke-miterlimit="10"/><path d="M340.8 307.2 L345.8 304.2 L350.8 307.2 Z" fill="#fff"/><rect x="340.8" y="307.2" width="10" height="1.2" fill="#fff"/><rect x="341.3" y="308.4" width="0.9" height="3" fill="#fff"/><rect x="344.1" y="308.4" width="0.9" height="3" fill="#fff"/><rect x="346.8" y="308.4" width="0.9" height="3" fill="#fff"/><rect x="349.4" y="308.4" width="0.9" height="3" fill="#fff"/>
<path d="M359.20 326.80 C356.90 321.30 351.60 315.80 351.60 308.90 A7.60 7.60 0 1 1 366.80 308.90 C366.80 315.80 361.50 321.30 359.20 326.80 Z" fill="#1766a6" stroke="#fff" stroke-width="1" stroke-miterlimit="10"/><path d="M354.2 308.2 L359.2 305.2 L364.2 308.2 Z" fill="#fff"/><rect x="354.2" y="308.2" width="10" height="1.2" fill="#fff"/><rect x="354.7" y="309.4" width="0.9" height="3" fill="#fff"/><rect x="357.5" y="309.4" width="0.9" height="3" fill="#fff"/><rect x="360.2" y="309.4" width="0.9" height="3" fill="#fff"/><rect x="362.8" y="309.4" width="0.9" height="3" fill="#fff"/>
<path d="M330.80 328.80 C328.50 323.30 323.20 317.80 323.20 310.90 A7.60 7.60 0 1 1 338.40 310.90 C338.40 317.80 333.10 323.30 330.80 328.80 Z" fill="#2db5e6" stroke="#fff" stroke-width="1" stroke-miterlimit="10"/><path d="M326.0 314.0 L326.0 307.4 L327.4 307.4 L327.4 310.2 L329.3 310.2 L330.8 309.2 L335.6 310.2 L335.6 314.0 Z" fill="#fff"/>
<path d="M466.10 333.00 C463.80 327.50 458.50 322.00 458.50 315.10 A7.60 7.60 0 1 1 473.70 315.10 C473.70 322.00 468.40 327.50 466.10 333.00 Z" fill="#2db5e6" stroke="#fff" stroke-width="1" stroke-miterlimit="10"/><path d="M461.3 318.2 L461.3 311.6 L462.7 311.6 L462.7 314.4 L464.6 314.4 L466.1 313.4 L470.9 314.4 L470.9 318.2 Z" fill="#fff"/>
<path d="M529.40 348.80 C527.10 343.30 521.80 337.80 521.80 330.90 A7.60 7.60 0 1 1 537.00 330.90 C537.00 337.80 531.70 343.30 529.40 348.80 Z" fill="#1766a6" stroke="#fff" stroke-width="1" stroke-miterlimit="10"/><path d="M524.4 330.2 L529.4 327.2 L534.4 330.2 Z" fill="#fff"/><rect x="524.4" y="330.2" width="10" height="1.2" fill="#fff"/><rect x="524.9" y="331.4" width="0.9" height="3" fill="#fff"/><rect x="527.7" y="331.4" width="0.9" height="3" fill="#fff"/><rect x="530.4" y="331.4" width="0.9" height="3" fill="#fff"/><rect x="533.0" y="331.4" width="0.9" height="3" fill="#fff"/>
<path d="M515.00 349.55 C512.70 344.05 507.40 338.55 507.40 331.65 A7.60 7.60 0 1 1 522.60 331.65 C522.60 338.55 517.30 344.05 515.00 349.55 Z" fill="#1766a6" stroke="#fff" stroke-width="1" stroke-miterlimit="10"/><path d="M510.0 331.0 L515.0 328.0 L520.0 331.0 Z" fill="#fff"/><rect x="510.0" y="331.0" width="10" height="1.2" fill="#fff"/><rect x="510.5" y="332.2" width="0.9" height="3" fill="#fff"/><rect x="513.3" y="332.2" width="0.9" height="3" fill="#fff"/><rect x="516.0" y="332.2" width="0.9" height="3" fill="#fff"/><rect x="518.6" y="332.2" width="0.9" height="3" fill="#fff"/>
<path d="M576.90 352.10 C574.60 346.60 569.30 341.10 569.30 334.20 A7.60 7.60 0 1 1 584.50 334.20 C584.50 341.10 579.20 346.60 576.90 352.10 Z" fill="#2db5e6" stroke="#fff" stroke-width="1" stroke-miterlimit="10"/><path d="M572.1 337.3 L572.1 330.7 L573.5 330.7 L573.5 333.5 L575.4 333.5 L576.9 332.5 L581.7 333.5 L581.7 337.3 Z" fill="#fff"/>
<path d="M546.25 355.30 C543.95 349.80 538.65 344.30 538.65 337.40 A7.60 7.60 0 1 1 553.85 337.40 C553.85 344.30 548.55 349.80 546.25 355.30 Z" fill="#2db5e6" stroke="#fff" stroke-width="1" stroke-miterlimit="10"/><path d="M541.5 340.5 L541.5 333.9 L542.9 333.9 L542.9 336.7 L544.8 336.7 L546.2 335.7 L551.0 336.7 L551.0 340.5 Z" fill="#fff"/>
<path d="M286.50 357.50 C284.20 352.00 278.90 346.50 278.90 339.60 A7.60 7.60 0 1 1 294.10 339.60 C294.10 346.50 288.80 352.00 286.50 357.50 Z" fill="#2db5e6" stroke="#fff" stroke-width="1" stroke-miterlimit="10"/><path d="M281.7 342.7 L281.7 336.1 L283.1 336.1 L283.1 338.9 L285.0 338.9 L286.5 337.9 L291.3 338.9 L291.3 342.7 Z" fill="#fff"/>
<path d="M498.10 359.55 C495.80 354.05 490.50 348.55 490.50 341.65 A7.60 7.60 0 1 1 505.70 341.65 C505.70 348.55 500.40 354.05 498.10 359.55 Z" fill="#1766a6" stroke="#fff" stroke-width="1" stroke-miterlimit="10"/><path d="M493.1 341.0 L498.1 338.0 L503.1 341.0 Z" fill="#fff"/><rect x="493.1" y="341.0" width="10" height="1.2" fill="#fff"/><rect x="493.6" y="342.2" width="0.9" height="3" fill="#fff"/><rect x="496.4" y="342.2" width="0.9" height="3" fill="#fff"/><rect x="499.1" y="342.2" width="0.9" height="3" fill="#fff"/><rect x="501.7" y="342.2" width="0.9" height="3" fill="#fff"/>
<path d="M528.75 368.90 C526.45 363.40 521.15 357.90 521.15 351.00 A7.60 7.60 0 1 1 536.35 351.00 C536.35 357.90 531.05 363.40 528.75 368.90 Z" fill="#1766a6" stroke="#fff" stroke-width="1" stroke-miterlimit="10"/><path d="M523.8 350.3 L528.8 347.3 L533.8 350.3 Z" fill="#fff"/><rect x="523.8" y="350.3" width="10" height="1.2" fill="#fff"/><rect x="524.2" y="351.5" width="0.9" height="3" fill="#fff"/><rect x="527.0" y="351.5" width="0.9" height="3" fill="#fff"/><rect x="529.8" y="351.5" width="0.9" height="3" fill="#fff"/><rect x="532.4" y="351.5" width="0.9" height="3" fill="#fff"/>
<rect x="44.2" y="268.6" width="18.3" height="34.2" rx="2.5" fill="#fff" stroke="#5fa6c4" stroke-opacity="0.8" stroke-width="1.3"/>
<line x1="45" y1="285.5" x2="62" y2="285.5" stroke="#ddd" stroke-width="1"/>
<path d="M49.8 277.6 L57.2 277.6 M53.5 273.9 L53.5 281.3" stroke="#111" stroke-width="1.4"/>
<path d="M49.5 294 L57.5 294" stroke="#111" stroke-width="1.4"/>
<rect x="714" y="391.5" width="229" height="9" fill="#fff" fill-opacity="0.7"/>
<text x="717" y="398.3" font-size="6.1" font-family="Liberation Sans" fill="#555" textLength="223" lengthAdjust="spacingAndGlyphs"><tspan fill="#2a7fb8">Leaflet</tspan> | Map data © <tspan fill="#2a7fb8">OpenStreetMap</tspan> contributors, <tspan fill="#2a7fb8">CC-BY-SA</tspan>, Imagery © <tspan fill="#2a7fb8">Mapbox</tspan></text>
</svg><!--MAPEND-->
<!-- tabs -->
<div class="a" style="left:44px;top:429px;width:888px;height:1px;background:#efefef"></div>
<div class="tab" style="left:55px">Fill Rate (Volume)</div>
<div class="tab" style="left:136px">Fill Rate (Revenue)</div>
<div class="tab" style="left:222px">Safety Stock</div>
<div class="tab" style="left:285px">Inventory Value</div>
<div class="tab" style="left:357px">Days Of Supply</div>
<div class="tab" style="left:431px">Underused Resources</div>
<div class="tab" style="left:528px">Bottleneck Resources</div>
<div class="a" style="left:615px;top:410px;width:36px;height:18px;background:#378ac7;border-radius:2px"></div>
<div class="tab" style="left:622px;color:#fff">Sales</div>
<!-- alerts panel -->
<div class="panel" style="left:36px;top:431px;width:274px;height:101px"></div>
<div class="a" style="left:310px;top:431px;width:1px;height:94px;background:#eee"></div>
<svg class="a" style="left:46px;top:440px" width="12" height="11" viewBox="0 0 12 11"><path d="M6 0.5 L11.5 10.5 L0.5 10.5Z" fill="#6a6a6a"/><path d="M6 3.8 L6 7.2" stroke="#fff" stroke-width="1.2"/><circle cx="6" cy="8.8" r="0.7" fill="#fff"/></svg>
<div class="t" style="left:64px;top:440.5px;font-size:9.6px;color:#6a6a6a">Sales Target Alerts (1)</div>
<svg class="a" style="left:270px;top:439px" width="13" height="12" viewBox="0 0 13 12"><path d="M1 1.5 L8 1.5 M1 4.5 L6.5 4.5 M1 7.5 L5 7.5 M1 10.5 L3.5 10.5" stroke="#666" stroke-width="1.3"/><path d="M10.5 1 L10.5 10.5 M8.5 8.5 L10.5 11 L12.5 8.5" fill="none" stroke="#666" stroke-width="1.2"/></svg>
<div class="a" style="left:287px;top:437px;width:1px;height:18px;background:#eee"></div>
<svg class="a" style="left:292px;top:442px" width="9" height="7" viewBox="0 0 9 7"><path d="M1.5 2 L4.5 5 L7.5 2" fill="none" stroke="#555" stroke-width="1.1"/></svg>
<div class="a" style="left:45px;top:463px;width:260px;height:62px;border:1px solid #9dbcd3"></div>
<svg class="a" style="left:50px;top:468px" width="24" height="24" viewBox="0 0 24 24"><circle cx="12" cy="12" r="11.7" fill="#d5e5f1"/><path d="M12 6.5 L17.8 16.5 L6.2 16.5Z" fill="#3a83c0" stroke="#3a83c0" stroke-width="0.6" stroke-linejoin="round"/><path d="M12 10 L12 13.3" stroke="#fff" stroke-width="1.3"/><circle cx="12" cy="15" r="0.7" fill="#fff"/></svg>
<div class="t" style="left:79px;top:468.5px;font-size:8.95px;color:#333">Sales Revenue Alert</div>
<div class="t" style="left:79px;top:479.5px;font-size:6.7px;color:#aaa">Greek, DC - Austria</div>
<div class="t" style="left:79px;top:493.3px;font-size:6.72px;color:#606060">Sales Revenue in May 2021 is 13.46% below Sales Target.</div>
<div class="t" style="left:79px;top:502.5px;font-size:6.7px;color:#aaa">Cumulative Revenue(€):</div>
<div class="t" style="left:161px;top:502.5px;font-size:6.7px;color:#555">9.09M</div>
<div class="t" style="left:79px;top:512px;font-size:6.7px;color:#aaa">Cumulative Target(€):</div>
<div class="t" style="left:152px;top:512px;font-size:6.7px;color:#555">10.51M</div>
<!-- detail panel -->
<div class="panel" style="left:311px;top:431px;width:633px;height:94px"></div>
<svg class="a" style="left:319px;top:443px" width="19" height="19" viewBox="0 0 19 19"><circle cx="9.5" cy="9.5" r="9.2" fill="#d5e5f1"/><path d="M9.5 5.5 L13.5 12.8 L5.5 12.8Z" fill="#3a83c0"/><path d="M9.5 8 L9.5 10.5" stroke="#fff" stroke-width="1"/><circle cx="9.5" cy="11.7" r="0.5" fill="#fff"/></svg>
<div class="t" style="left:347px;top:443.5px;font-size:11.2px;color:#3d3d3d">Sales Revenue Alert</div>
<div class="t" style="left:347px;top:459.5px;font-size:6.7px;color:#aaa">Greek, DC - Austria</div>
<div class="t" style="left:321px;top:476px;font-size:7.85px;color:#555">Sales Revenue in May 2021 is 13.46% below Sales Target.</div>
<div class="t" style="left:321px;top:493.5px;font-size:7.75px;color:#555">Supply Chain Scope</div>
<div class="a" style="left:320px;top:505px;width:282px;height:1px;background:#9a9a9a"></div>
<div class="t" style="left:321px;top:512px;font-size:7.6px;color:#b5b5b5">Item:</div>
<div class="t" style="left:500px;width:100px;text-align:right;top:512px;font-size:7.6px;color:#444">Greek</div>
<div class="t" style="left:321px;top:522px;font-size:7.6px;color:#b5b5b5">Stock Location:</div>
<div class="t" style="left:500px;width:100px;text-align:right;top:522px;font-size:7.6px;color:#444">DC - Austria</div>
<div class="t" style="left:650px;top:493.5px;font-size:7.75px;color:#555">Key Performance Indicator</div>
<div class="a" style="left:650px;top:505px;width:282px;height:1px;background:#9a9a9a"></div>
<div class="t" style="left:651px;top:512px;font-size:7.6px;color:#b5b5b5">Cumulative Revenue (€):</div>
<div class="t" style="left:830px;width:100px;text-align:right;top:512px;font-size:7.6px;color:#444">9.09M</div>
<div class="t" style="left:651px;top:522px;font-size:7.6px;color:#b5b5b5">Cumulative Target (€):</div>
<div class="t" style="left:830px;width:100px;text-align:right;top:522px;font-size:7.6px;color:#444">10.51M</div>
<div class="a" style="left:311px;top:525px;width:633px;height:7px;background:#fff"></div>
<svg class="a" style="left:898px;top:444px" width="12" height="12" viewBox="0 0 12 12"><path d="M5 2 L1.5 2 L1.5 10.5 L10 10.5 L10 7" fill="none" stroke="#666" stroke-width="1.1"/><path d="M6 1 L11 1 L11 6 M11 1 L5.5 6.5" fill="none" stroke="#666" stroke-width="1.1"/></svg>
<div class="a" style="left:914px;top:441px;width:1px;height:17px;background:#eee"></div>
<svg class="a" style="left:919px;top:445px" width="11" height="11" viewBox="0 0 11 11"><path d="M1.5 1.5 L9.5 9.5 M9.5 1.5 L1.5 9.5" stroke="#555" stroke-width="1.3"/></svg>
</div>
<!-- scrollbar -->
<div class="a" style="left:945px;top:78px;width:3.5px;height:255px;background:#e3e3e3;border-radius:2px"></div>

</body></html>
